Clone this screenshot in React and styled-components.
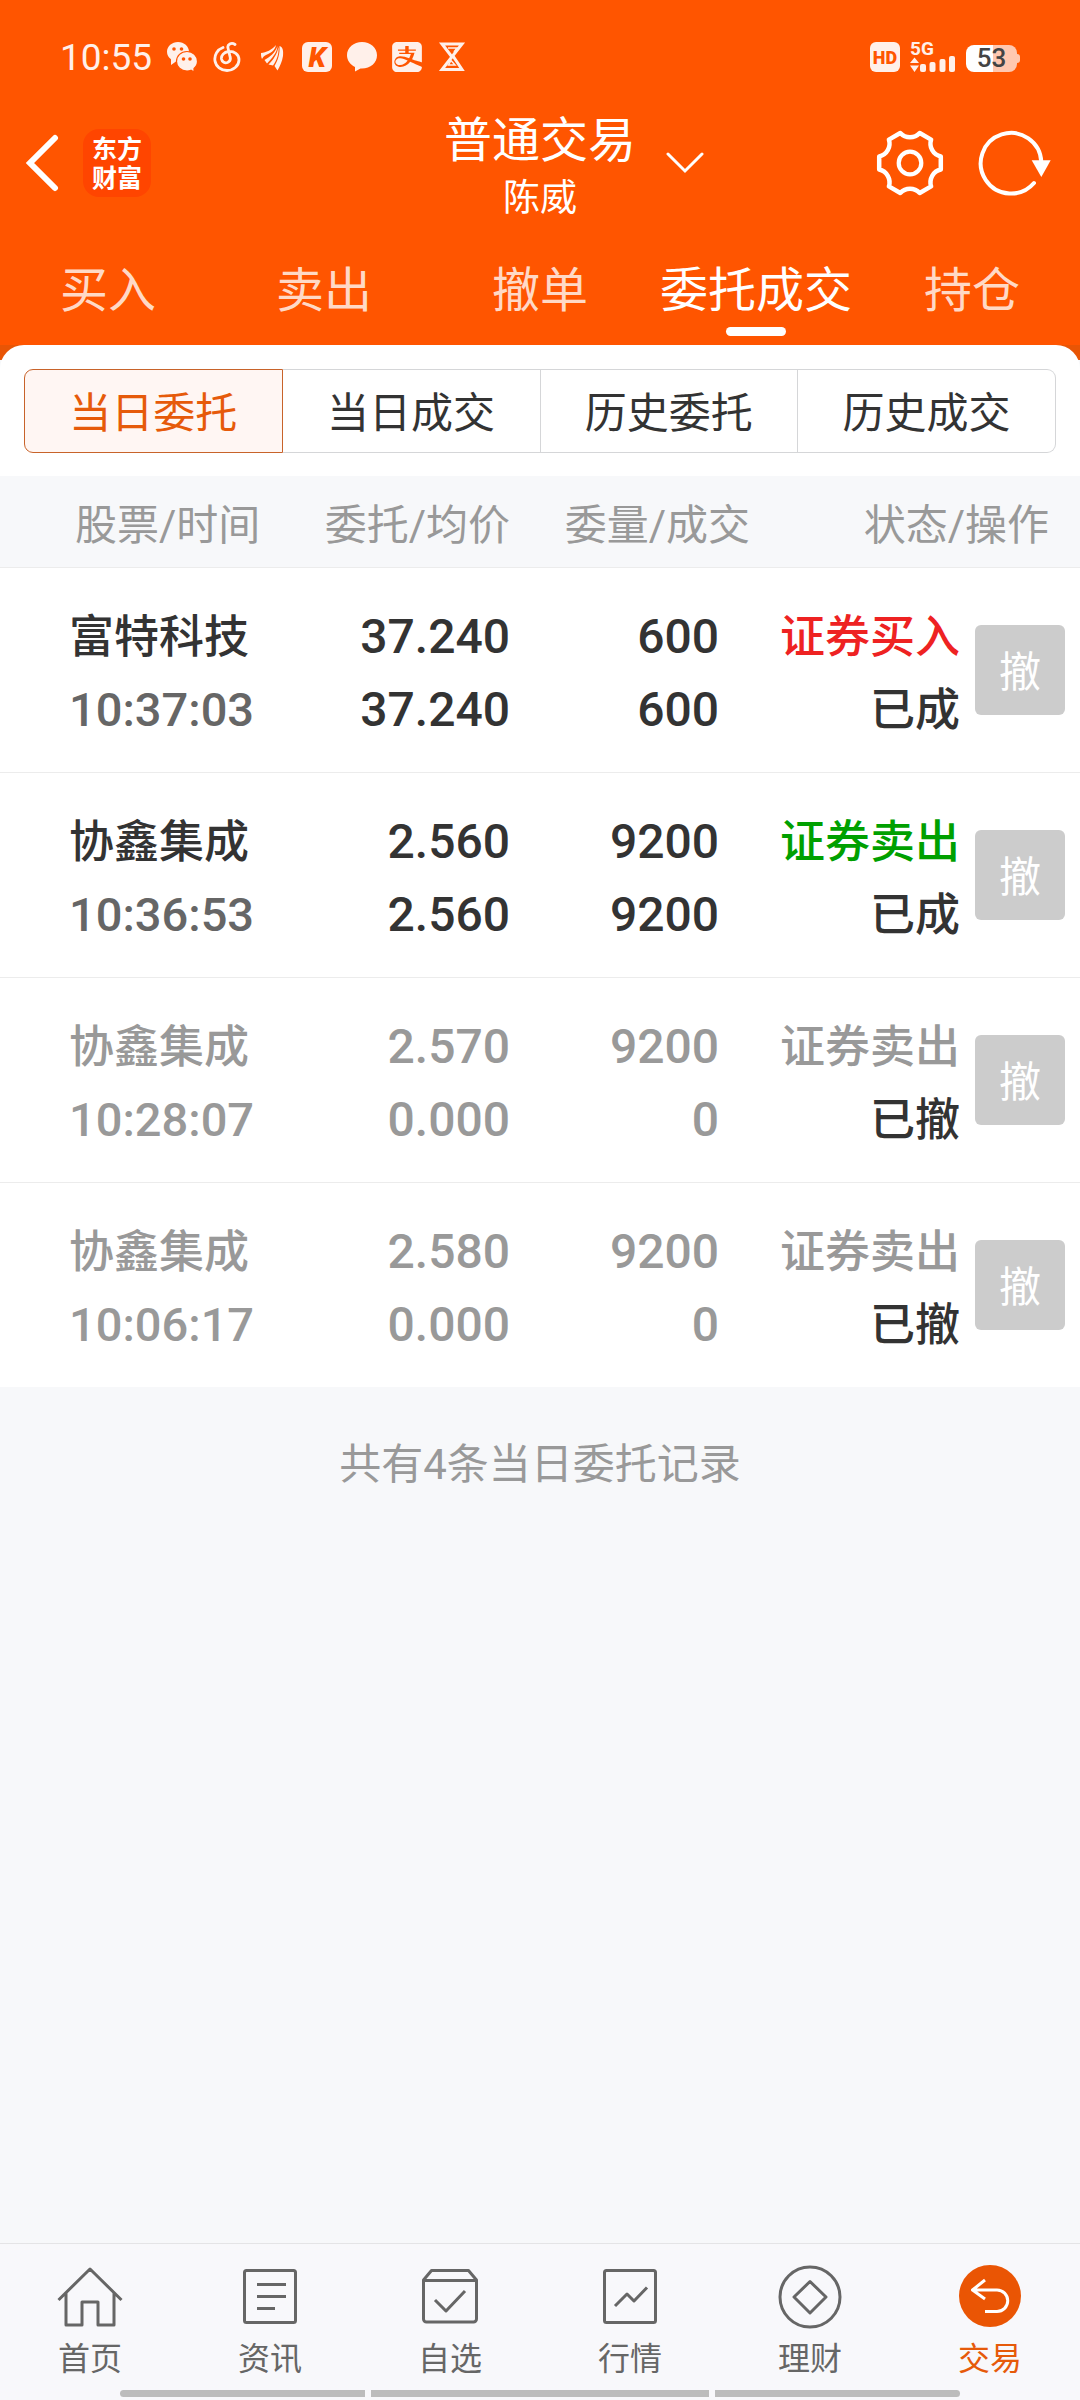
import React, { useState } from "react";
import styled, { createGlobalStyle } from "styled-components";
import { SiAlipay } from "react-icons/si";

const GlobalStyle = createGlobalStyle`
  * {
    box-sizing: border-box;
  }
  body {
    margin: 0;
    background: #f7f8fa;
    font-family: Roboto, "Noto Sans CJK SC", sans-serif;
    color: #333;
  }
  button {
    padding: 0;
    border: 0;
    background: none;
    font: inherit;
    color: inherit;
    cursor: pointer;
  }
  a {
    color: inherit;
    text-decoration: none;
  }
  svg {
    display: block;
  }
`;

const Screen = styled.div`
  min-height: 100vh;
  display: flex;
  flex-direction: column;
`;

const Top = styled.header`
  background: #ff5500;
  color: #fff;
`;

/* status bar */

const StatusBar = styled.div`
  height: 110px;
  padding: 4px 63px 0 60px;
  display: flex;
  align-items: center;
  justify-content: space-between;
  color: #fff0ea;
`;

const Notices = styled.div`
  display: flex;
  align-items: center;
  gap: 15px;
`;

const Clock = styled.span`
  font-size: 37px;
`;

const Signals = styled.div`
  display: flex;
  align-items: center;
  gap: 10px;
`;

const Badge = styled.span`
  width: 30px;
  height: 30px;
  border-radius: 6px;
  background: #fff0ea;
  color: #ff5500;
  display: flex;
  align-items: center;
  justify-content: center;
  font-size: ${(props) => props.$size}px;
  font-weight: 900;
  font-style: ${(props) => (props.$slanted ? "italic" : "normal")};
`;

const Network = styled.span`
  width: 46px;
  height: 30px;
  display: flex;
  flex-direction: column;
  font-size: 19px;
  font-weight: 700;
  line-height: 14px;
`;

const Battery = styled.span`
  width: 51px;
  height: 27px;
  margin-top: 3px;
  border-radius: 8px;
  background: linear-gradient(90deg, #fff 53%, #ffc8b0 53%);
  color: #444;
  font-size: 26px;
  font-weight: 500;
  line-height: 27px;
  text-align: center;
  position: relative;
  &::after {
    content: "";
    position: absolute;
    left: 51px;
    top: 9px;
    width: 3px;
    height: 9px;
    border-radius: 0 3px 3px 0;
    background: #ffc8b0;
  }
`;

/* title row */

const TitleBar = styled.div`
  display: grid;
  grid-template-columns: 1fr auto 1fr;
`;

const TitleSide = styled.div`
  display: flex;
  align-items: center;
  justify-content: ${(props) => (props.$end ? "space-between" : "flex-start")};
  padding: 0 ${(props) => (props.$end ? 28 : 0)}px 12px
    ${(props) => (props.$end ? 30 : 24)}px;
`;

const TitleText = styled.div`
  padding-top: 2px;
  text-align: center;
  line-height: 58px;
`;

const Actions = styled.div`
  display: flex;
  gap: 34px;
`;

const Logo = styled.a`
  width: 68px;
  height: 68px;
  margin-left: 22px;
  border-radius: 16px;
  background: #ff4500;
  padding: 4px 8px;
  font-family: "Noto Sans CJK SC", sans-serif;
  font-size: 25px;
  font-weight: 700;
  line-height: 29px;
  text-align: center;
`;

const Title = styled.h1`
  margin: 0;
  font-size: 48px;
  font-weight: 400;
`;

const Holder = styled.p`
  margin: 0;
  font-size: 37px;
`;

/* main tabs */

const Tabs = styled.nav`
  display: grid;
  grid-template-columns: repeat(5, 1fr);
`;

const Tab = styled.button`
  height: 117px;
  padding-top: 26px;
  display: flex;
  flex-direction: column;
  align-items: center;
  font-size: 48px;
  line-height: 73px;
  white-space: nowrap;
  color: ${(props) => (props.$active ? "#fff" : "#ffd9c6")};
  &::after {
    content: "";
    width: 60px;
    height: 9px;
    border-radius: 5px;
    background: ${(props) => (props.$active ? "#fff" : "transparent")};
  }
`;

/* order list */

const Panel = styled.main`
  flex: 1;
  background: linear-gradient(#e85505 15px, #f7f8fa 15px);
`;

const Switcher = styled.div`
  padding: 24px 24px 23px;
  border-radius: 24px 24px 0 0;
  background: #fff;
  display: flex;
`;

const Segment = styled.button`
  flex: 1;
  height: 84px;
  padding-bottom: 3px;
  border: 1px solid ${(props) => (props.$active ? "#c8632a" : "#d5d6d8")};
  border-left-width: ${(props) => (props.$active ? 1 : 0)}px;
  background: ${(props) => (props.$active ? "#fff6f3" : "#fff")};
  color: ${(props) => (props.$active ? "#e65a0a" : "#333")};
  font-size: 42px;
  &:first-child {
    border-radius: 9px 0 0 9px;
  }
  &:last-child {
    border-radius: 0 9px 9px 0;
  }
`;

const Orders = styled.table`
  width: 100%;
  table-layout: fixed;
  border-collapse: separate;
  border-spacing: 0;
  background: #fff;
`;

const Col = styled.col`
  width: ${(props) => props.$width}px;
`;

const HeadCell = styled.th`
  height: 92px;
  padding: 0 ${(props) => props.$right || 0}px 0
    ${(props) => props.$left || 0}px;
  border-bottom: 1px solid #ececec;
  background: #f7f8fa;
  color: #999;
  font-size: 42px;
  font-weight: 400;
  text-align: ${(props) => (props.$left ? "left" : "right")};
  white-space: nowrap;
`;

const Row = styled.tr`
  color: ${(props) => (props.$cancelled ? "#999" : "#333")};
  &:not(:last-child) td {
    border-bottom: 1px solid #ececec;
  }
`;

const Cell = styled.td`
  padding: 32px ${(props) => props.$right || 0}px 26px
    ${(props) => props.$left || 0}px;
  font-size: 48px;
  font-weight: 500;
  line-height: 73px;
  text-align: ${(props) => (props.$left ? "left" : "right")};
  white-space: nowrap;
`;

const Line = styled.div`
  height: 73px;
`;

const Label = styled(Line)`
  font-family: "Noto Sans CJK SC", sans-serif;
  font-size: 45px;
  line-height: 68px;
  color: ${(props) => props.$color || "inherit"};
`;

const Time = styled(Line)`
  font-size: 47px;
  color: ${(props) => (props.$cancelled ? "inherit" : "#666")};
`;

const CancelCell = styled.td`
  text-align: center;
  vertical-align: middle;
`;

const CancelButton = styled.button`
  width: 90px;
  height: 90px;
  padding-bottom: 3px;
  border-radius: 6px;
  background: #ccc;
  color: #fff;
  font-size: 42px;
`;

const Summary = styled.p`
  margin: 0;
  padding: 48px 0;
  font-size: 42px;
  line-height: 60px;
  text-align: center;
  color: #999;
`;

/* bottom bar */

const BottomBar = styled.nav`
  border-top: 1px solid #e4e4e6;
  background: #f8f8fb;
`;

const BottomTabs = styled.div`
  display: grid;
  grid-template-columns: repeat(6, 1fr);
`;

const BottomTab = styled.a`
  padding-top: 19px;
  display: flex;
  flex-direction: column;
  align-items: center;
  color: ${(props) => (props.$active ? "#e65a0a" : "#666")};
  font-size: 32px;
  line-height: 56px;
`;

const Gesture = styled.div`
  height: 13px;
  padding: 3px 120px;
  display: flex;
  gap: 6px;
`;

const Strip = styled.span`
  flex: ${(props) => props.$grow};
  background: #bcbcbc;
  &:first-child {
    border-radius: 4px 0 0 4px;
  }
  &:last-child {
    border-radius: 0 4px 4px 0;
  }
`;

const WechatIcon = () => (
  <svg width="30" height="30" viewBox="0 0 30 30" fill="currentColor">
    <path d="M11 0C5 0 0 4.300 0 9.700c0 3.200 1.500 5.700 4 7.600V23l5-3.600C17 20 22 15 22 9.700 22 4.300 17 0 11 0z" />
    <path
      d="M20 9.500c-6 0-10.500 4.500-10.500 10s4.500 9.500 10.500 9.500c1.500 0 3-.3 4-.8l3 1.800v-3.500c2-1.700 3.500-4.200 3.500-7 0-5.500-4.500-10-10.500-10z"
      stroke="#ff5500"
      strokeWidth="1.200"
    />
    <g fill="#ff5500">
      <circle cx="7" cy="7" r="1.800" />
      <circle cx="14.500" cy="7" r="1.800" />
      <circle cx="16.500" cy="17" r="1.800" />
      <circle cx="23" cy="17" r="1.800" />
    </g>
  </svg>
);

const MusicIcon = () => (
  <svg width="30" height="30" viewBox="0 0 30 30" fill="none" stroke="currentColor">
    <path
      d="M11 5.500C5.500 7.500 2 13 3 19c1 5.500 6 9.500 12 9.500S27 24 27 18c0-6-5-9-10.500-8.500C12 10 9 13.500 9.500 17c.5 3 3.500 4.500 6 3.500s3.300-3.500 2.500-6L16 6c-1-3.500 3.500-6 7-3.500"
      strokeWidth="2.800"
      strokeLinecap="round"
    />
  </svg>
);

const WingIcon = () => (
  <svg width="30" height="30" viewBox="0 0 30 30" fill="currentColor">
    <path d="M4 11C9 10.500 15 8 19 3c-1 6-6 8-9 9.500-3 1.500-4 2.500-5 4.500-1-2-1-4-1-6z" />
    <path d="M20.500 4C20 11 15 16 10 21.500L7.500 18C13 15 18 11 20.500 4z" />
    <path d="M21.500 5c.5 7-1.500 13-5.500 18.500l-4.500-1C17 17 20 12 21.500 5z" />
    <path d="M22.500 4c3.500 1 4 5 3.500 10-1 6-3 10-5.500 14.500L17.500 24C21 18 23 12 22.500 4z" />
  </svg>
);

const BubbleIcon = () => (
  <svg width="30" height="30" viewBox="0 0 30 30" fill="currentColor">
    <path d="M15 0C6.700 0 0 5.600 0 13.300c0 5 3 9.200 8 11.700v4.500l5.500-3c9.500.6 16.500-5.200 16.500-13.200C30 5.600 23.300 0 15 0z" />
  </svg>
);

const HourglassIcon = () => (
  <svg width="30" height="30" viewBox="0 0 30 30" fill="none" stroke="currentColor">
    <path d="M15 15L5 2h20L5 27.500h20L15 12.500" strokeWidth="3" />
    <path d="M11 6h9l-3 4M11.500 23l2.500-4.500L18 23z" strokeWidth="1.500" />
  </svg>
);

const BarsIcon = () => (
  <svg width="46" height="16" viewBox="0 14 46 16" fill="currentColor">
    <path d="M0 21l4.500-5.500L9 21zM0 23.500h9L4.500 30z" />
    <rect x="10" y="22" width="6" height="8" rx="2" />
    <rect x="19.500" y="20" width="6" height="10" rx="2" />
    <rect x="29.500" y="17" width="6" height="13" rx="2" />
    <rect x="39" y="14" width="6" height="16" rx="2" />
  </svg>
);

const BackIcon = () => (
  <svg width="37" height="58" viewBox="0 0 37 58" fill="none" stroke="#fff">
    <path d="M31 4L6 29l25 25" strokeWidth="6" strokeLinecap="round" />
  </svg>
);

const DownIcon = () => (
  <svg width="38" height="22" viewBox="0 0 38 22" fill="none" stroke="#fff">
    <path d="M2 2l17 17L36 2" strokeWidth="3" strokeLinecap="round" />
  </svg>
);

const GearIcon = () => (
  <svg width="68" height="68" viewBox="-34 -34 68 68" fill="none" stroke="#fff">
    <path
      d="M30.800 6.500A13.200 13.200 0 0 0 21.100 23.400L9.700 30A13.200 13.200 0 0 0 -9.700 30L-21.100 23.400A13.200 13.200 0 0 0 -30.800 6.500V-6.500A13.200 13.200 0 0 0 -21.100 -23.400L-9.700 -30A13.200 13.200 0 0 0 9.700 -30L21.100 -23.400A13.200 13.200 0 0 0 30.800 -6.500z"
      strokeWidth="4.500"
      strokeLinejoin="round"
    />
    <circle r="11.300" strokeWidth="4.200" />
  </svg>
);

const RefreshIcon = () => (
  <svg width="74" height="68" viewBox="-33 -34 74 68" fill="none" stroke="#fff">
    <path
      d="M30.300 -1A30.300 30.300 0 1 0 23 20"
      strokeWidth="4"
      strokeLinecap="round"
    />
    <path d="M20.700 -2.700h19L30.300 14z" fill="#fff" stroke="none" />
  </svg>
);

const NavIcon = ({ children }) => (
  <svg
    width="68"
    height="68"
    viewBox="0 0 68 68"
    fill="none"
    stroke="#666"
    strokeWidth="3"
    strokeLinejoin="round"
  >
    {children}
  </svg>
);

const bottomTabs = [
  {
    name: "首页",
    icon: (
      <NavIcon>
        <path d="M2.500 37L34 6l31.500 31M10 30v32h16V39h16v23h16V30" />
      </NavIcon>
    ),
  },
  {
    name: "资讯",
    icon: (
      <NavIcon>
        <rect x="8.500" y="7.500" width="51" height="52" rx="2" />
        <path d="M21 21.500h29M21 33.500h29M21 45.500h18" />
      </NavIcon>
    ),
  },
  {
    name: "自选",
    icon: (
      <NavIcon>
        <path d="M7.500 17l8-9.500h37l8 9.500v39a3 3 0 0 1-3 3h-47a3 3 0 0 1-3-3zM7.500 17.500h53M19 37l11 11 19-20" />
      </NavIcon>
    ),
  },
  {
    name: "行情",
    icon: (
      <NavIcon>
        <rect x="8.500" y="7.500" width="51" height="52" rx="2" />
        <path d="M19 43l12-12 7 7 13-13.500" />
      </NavIcon>
    ),
  },
  {
    name: "理财",
    icon: (
      <NavIcon>
        <circle cx="34" cy="34" r="30" />
        <path d="M34 18.500L50 34 34 50 18 34z" />
      </NavIcon>
    ),
  },
  {
    name: "交易",
    icon: (
      <NavIcon>
        <circle cx="34" cy="33" r="31" fill="#ea5504" stroke="none" />
        <path
          d="M29 17L16.500 27 29 36M17 27h24a10.500 10.500 0 0 1 0 21.500H29"
          stroke="#fff"
        />
      </NavIcon>
    ),
  },
];

const tabs = ["买入", "卖出", "撤单", "委托成交", "持仓"];
const segments = ["当日委托", "当日成交", "历史委托", "历史成交"];

const orders = [
  {
    name: "富特科技",
    time: "10:37:03",
    price: "37.240",
    average: "37.240",
    amount: 600,
    filled: 600,
    side: "证券买入",
    color: "#ee2222",
    status: "已成",
  },
  {
    name: "协鑫集成",
    time: "10:36:53",
    price: "2.560",
    average: "2.560",
    amount: 9200,
    filled: 9200,
    side: "证券卖出",
    color: "#00a000",
    status: "已成",
  },
  {
    name: "协鑫集成",
    time: "10:28:07",
    price: "2.570",
    average: "0.000",
    amount: 9200,
    filled: 0,
    side: "证券卖出",
    status: "已撤",
    cancelled: true,
  },
  {
    name: "协鑫集成",
    time: "10:06:17",
    price: "2.580",
    average: "0.000",
    amount: 9200,
    filled: 0,
    side: "证券卖出",
    status: "已撤",
    cancelled: true,
  },
];

export default () => {
  const [tab, setTab] = useState("委托成交");
  const [segment, setSegment] = useState("当日委托");
  return (
    <Screen>
      <GlobalStyle />
      <Top>
        <StatusBar>
          <Notices>
            <Clock>10:55</Clock>
            <WechatIcon />
            <MusicIcon />
            <WingIcon />
            <Badge $size={28} $slanted>
              K
            </Badge>
            <BubbleIcon />
            <SiAlipay size={30} />
            <HourglassIcon />
          </Notices>
          <Signals>
            <Badge $size={18}>HD</Badge>
            <Network>
              5G
              <BarsIcon />
            </Network>
            <Battery>53</Battery>
          </Signals>
        </StatusBar>
        <TitleBar>
          <TitleSide>
            <button aria-label="返回">
              <BackIcon />
            </button>
            <Logo href="#">东方财富</Logo>
          </TitleSide>
          <TitleText>
            <Title>普通交易</Title>
            <Holder>陈威</Holder>
          </TitleText>
          <TitleSide $end>
            <button aria-label="切换账户">
              <DownIcon />
            </button>
            <Actions>
              <button aria-label="设置">
                <GearIcon />
              </button>
              <button aria-label="刷新">
                <RefreshIcon />
              </button>
            </Actions>
          </TitleSide>
        </TitleBar>
        <Tabs>
          {tabs.map((name) => (
            <Tab key={name} $active={name === tab} onClick={() => setTab(name)}>
              {name}
            </Tab>
          ))}
        </Tabs>
      </Top>
      <Panel>
        <Switcher>
          {segments.map((name) => (
            <Segment
              key={name}
              $active={name === segment}
              onClick={() => setSegment(name)}
            >
              {name}
            </Segment>
          ))}
        </Switcher>
        <Orders>
          <colgroup>
            <col />
            <Col $width={240} />
            <Col $width={240} />
            <Col $width={210} />
            <Col $width={120} />
          </colgroup>
          <thead>
            <tr>
              <HeadCell $left={75}>股票/时间</HeadCell>
              <HeadCell>委托/均价</HeadCell>
              <HeadCell>委量/成交</HeadCell>
              <HeadCell $right={31} colSpan={2}>
                状态/操作
              </HeadCell>
            </tr>
          </thead>
          <tbody>
            {orders.map((order) => (
              <Row key={order.time} $cancelled={order.cancelled}>
                <Cell $left={69}>
                  <Label>{order.name}</Label>
                  <Time $cancelled={order.cancelled}>{order.time}</Time>
                </Cell>
                <Cell>
                  <Line>{order.price}</Line>
                  <Line>{order.average}</Line>
                </Cell>
                <Cell $right={31}>
                  <Line>{order.amount}</Line>
                  <Line>{order.filled}</Line>
                </Cell>
                <Cell>
                  <Label $color={order.color}>{order.side}</Label>
                  <Label $color="#333">{order.status}</Label>
                </Cell>
                <CancelCell>
                  <CancelButton>撤</CancelButton>
                </CancelCell>
              </Row>
            ))}
          </tbody>
        </Orders>
        <Summary>共有{orders.length}条当日委托记录</Summary>
      </Panel>
      <BottomBar>
        <BottomTabs>
          {bottomTabs.map(({ name, icon }) => (
            <BottomTab key={name} href="#" $active={name === "交易"}>
              {icon}
              {name}
            </BottomTab>
          ))}
        </BottomTabs>
        <Gesture>
          <Strip $grow={245} />
          <Strip $grow={338} />
          <Strip $grow={245} />
        </Gesture>
      </BottomBar>
    </Screen>
  );
};
